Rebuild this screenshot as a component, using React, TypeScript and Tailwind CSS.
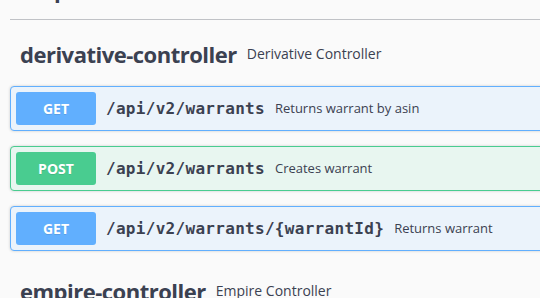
import React from 'react';

type Op = { method: 'GET' | 'POST'; path: string; summary: string };

const ops: Op[] = [
  { method: 'GET', path: '/api/v2/warrants', summary: 'Returns warrant by asin' },
  { method: 'POST', path: '/api/v2/warrants', summary: 'Creates warrant' },
  { method: 'GET', path: '/api/v2/warrants/{warrantId}', summary: 'Returns warrant' },
];

const styles = {
  GET: { block: 'border-[#61affe] bg-[#ebf3fb]', badge: 'bg-[#61affe]' },
  POST: { block: 'border-[#49cc90] bg-[#e8f6f0]', badge: 'bg-[#49cc90]' },
};

const TagHeading = ({ name, desc, className }: { name: string; desc?: string; className: string }) => (
  <div className={`flex items-center pl-[10px] pr-5 pb-[10px] mb-[5px] text-[#3b4151] ${className}`}>
    <span className="text-[22px] leading-[34px] font-bold tracking-[-0.5px]">{name}</span>
    {desc && <span className="pl-[10px] text-[14px] leading-[20px] font-normal">{desc}</span>}
  </div>
);

const Opblock = ({ op }: { op: Op }) => (
  <div className={`mb-[15px] rounded-[4px] border shadow-[0_0_3px_rgba(0,0,0,0.19)] ${styles[op.method].block}`}>
    <div className="flex items-center p-[5px]">
      <span
        className={`min-w-[80px] rounded-[3px] py-[6px] text-center text-[14px] leading-[21px] font-bold text-white [text-shadow:0_1px_0_rgba(0,0,0,0.1)] ${styles[op.method].badge}`}
      >
        {op.method}
      </span>
      <span className="px-[10px] font-['DejaVu_Sans_Mono',monospace] text-[16px] font-semibold tracking-[0.3px] text-[#3b4151]">
        {op.path}
      </span>
      <span className="text-[13px] text-[#3b4151]">{op.summary}</span>
    </div>
  </div>
);

export default function App() {
  return (
    <div className="w-[540px] h-[298px] overflow-hidden bg-[#fafafa] font-['Open_Sans',sans-serif]">
      <div className="w-[600px] pl-[10px]">
        <div className="-mt-[28px] border-b border-[rgba(59,65,81,0.3)]">
          <div className="pl-[10px] pb-[13px] text-[22px] leading-[34px] font-bold tracking-[-0.5px] text-[#3b4151]">
            map-controller
          </div>
        </div>
        <div className="mt-[7px]">
          <TagHeading name="derivative-controller" desc="Derivative Controller" className="pt-[10px]" />
          {ops.map((op, i) => (
            <Opblock key={i} op={op} />
          ))}
        </div>
        <TagHeading name="empire-controller" desc="Empire Controller" className="pt-[8px]" />
      </div>
    </div>
  );
}
